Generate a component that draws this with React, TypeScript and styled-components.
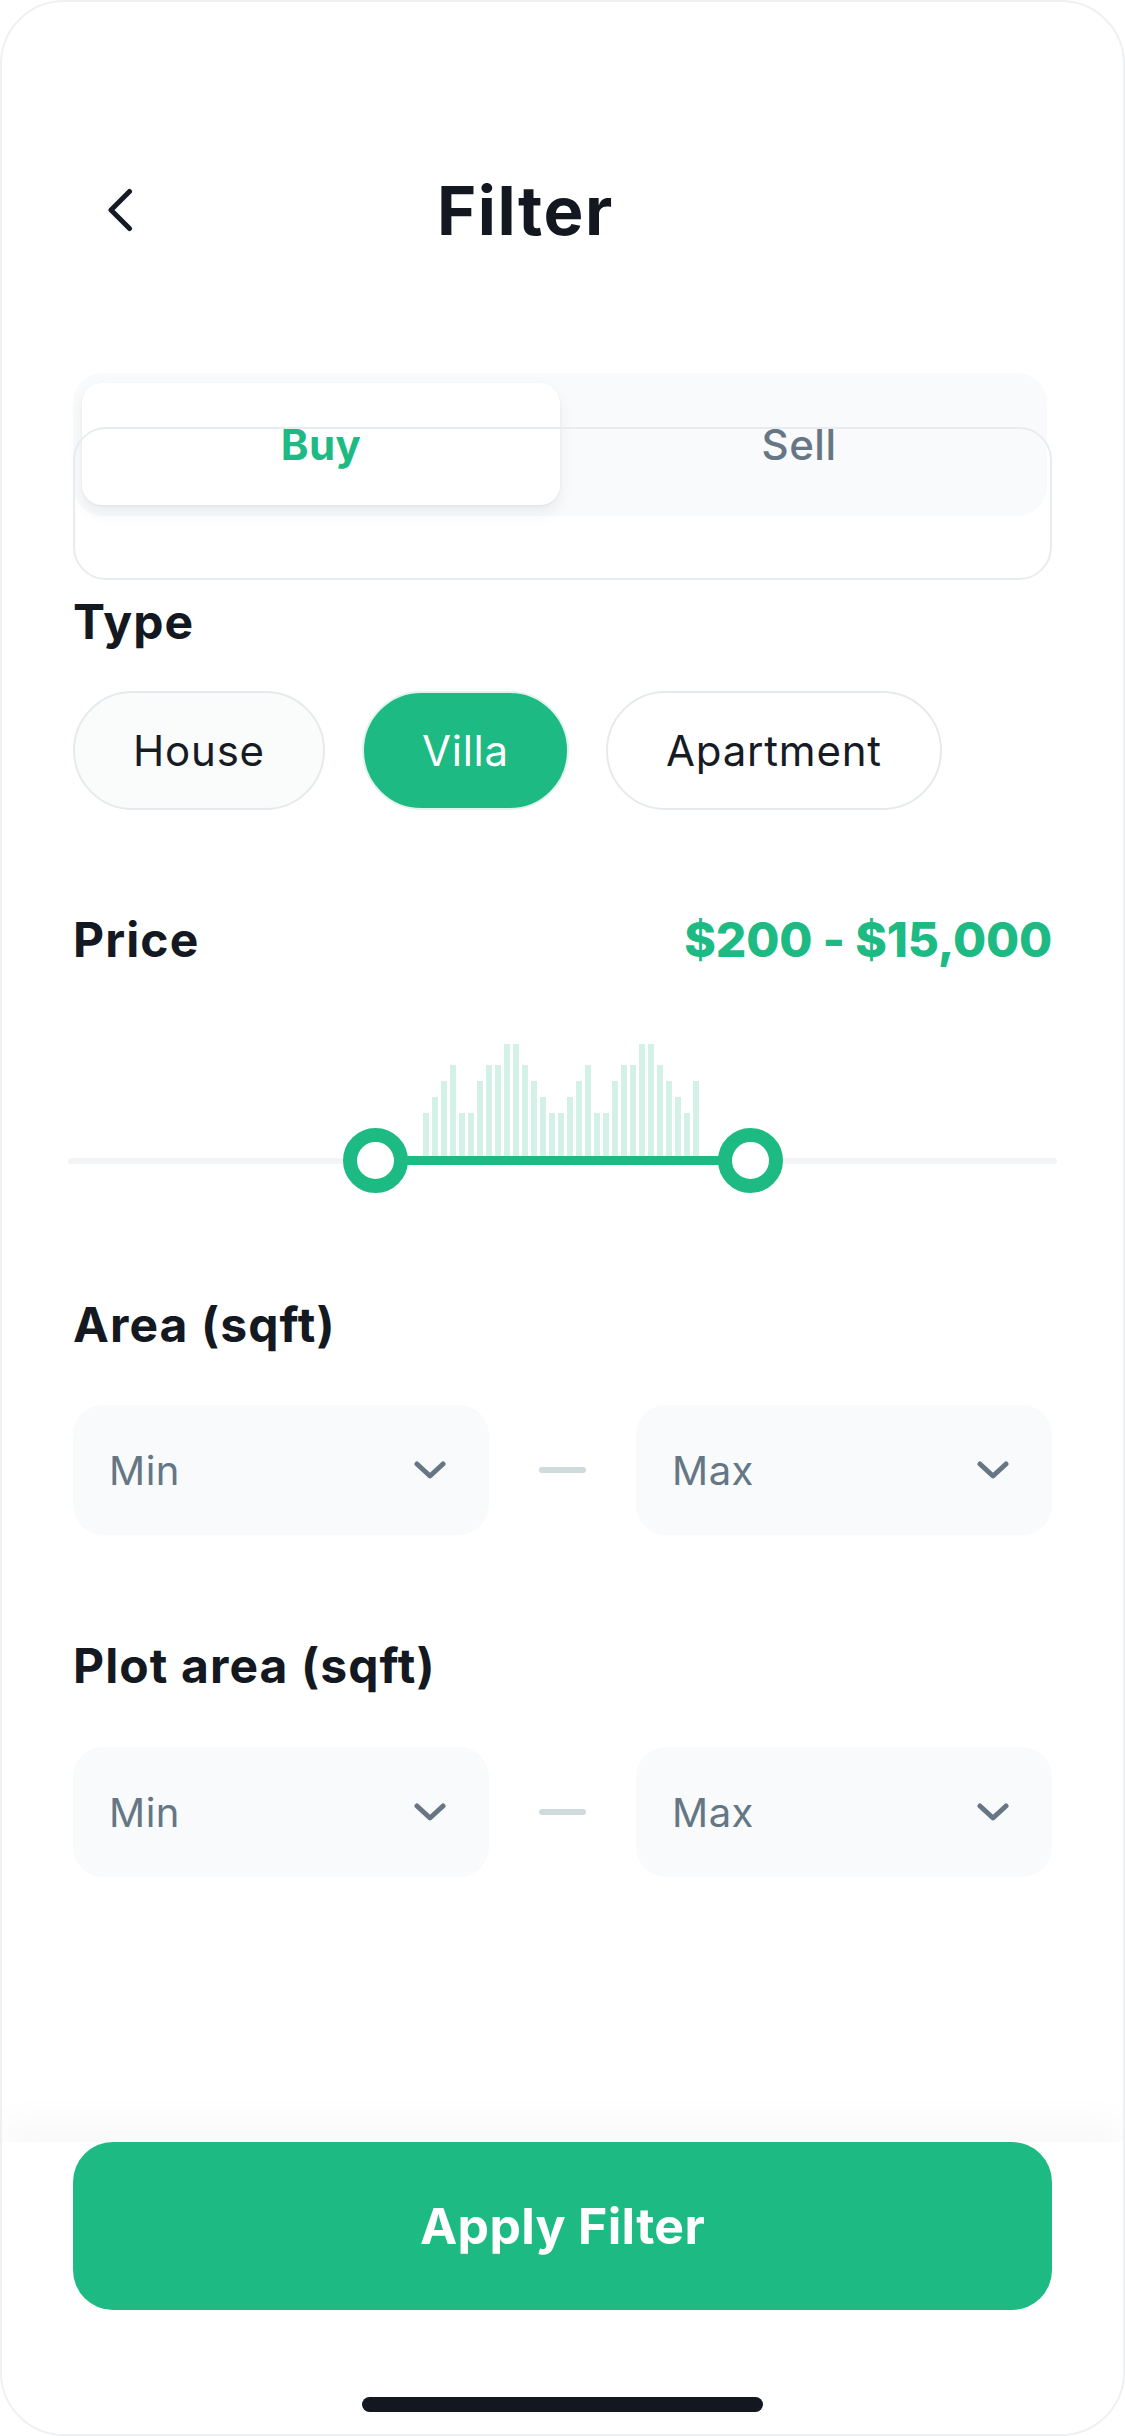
import styled, { createGlobalStyle } from "styled-components";

const GlobalStyle = createGlobalStyle`
  html, body {
    margin: 0;
    padding: 0;
    background: #ffffff;
  }
  body {
    font-family: Inter, "Noto Sans", sans-serif;
    -webkit-font-smoothing: antialiased;
  }
  * {
    box-sizing: border-box;
  }
`;

const GREEN = "#1dba84";

const Screen = styled.div`
  width: 1125px;
  height: 2436px;
  border: 2px solid #eef0f2;
  border-radius: 64px;
  overflow: hidden;
  background: #ffffff;
  display: flex;
  flex-direction: column;
`;

const Content = styled.main`
  flex: 1;
  padding: 0 71px;
  display: flex;
  flex-direction: column;
`;

const Header = styled.header`
  margin-top: 143px;
  height: 130px;
  display: flex;
  align-items: center;
`;

const BackButton = styled.button`
  margin-left: 35px;
  width: 26px;
  height: 44px;
  padding: 0;
  border: none;
  background: transparent;
  display: flex;
  align-items: center;
  justify-content: center;
`;

const Title = styled.h1`
  margin: 0 0 0 303px;
  font-size: 67px;
  line-height: 1;
  font-weight: 700;
  letter-spacing: 1.5px;
  color: #121720;
`;

const SegmentBlock = styled.div`
  position: relative;
  margin-top: 98px;
  height: 207px;
`;

const SegmentTrack = styled.div`
  height: 143px;
  margin-right: 5px;
  padding: 10px 9px 11px;
  border-radius: 30px;
  background: #f8fafb;
  display: flex;
`;

const SegmentTab = styled.button<{ $active?: boolean }>`
  flex: 1;
  border: none;
  border-radius: 20px;
  background: ${(p) => (p.$active ? "#ffffff" : "transparent")};
  box-shadow: ${(p) =>
    p.$active
      ? "0 8px 16px rgba(16, 24, 40, 0.06), 0 1px 3px rgba(16, 24, 40, 0.05)"
      : "none"};
  font-family: inherit;
  font-size: 42px;
  font-weight: ${(p) => (p.$active ? 700 : 500)};
  letter-spacing: 0.5px;
  color: ${(p) => (p.$active ? GREEN : "#677685")};
`;

const SegmentOutline = styled.div`
  position: absolute;
  top: 54px;
  left: 0;
  right: 0;
  height: 153px;
  border: 2.5px solid #e9ecee;
  border-radius: 33px;
  pointer-events: none;
`;

const SectionLabel = styled.h2<{ $gap: number }>`
  margin: ${(p) => p.$gap}px 0 0;
  font-size: 48px;
  line-height: 58px;
  font-weight: 700;
  letter-spacing: 1.1px;
  color: #131821;
`;

const ChipRow = styled.div`
  margin-top: 40px;
  display: flex;
  gap: 37px;
`;

type ChipTone = "muted" | "active" | "plain";

const Chip = styled.button<{ $tone: ChipTone }>`
  height: 119px;
  padding: 0 58px;
  border-radius: 60px;
  border: 2.5px solid ${(p) => (p.$tone === "active" ? "#e0f3ec" : "#e6eaec")};
  background: ${(p) =>
    p.$tone === "active" ? GREEN : p.$tone === "muted" ? "#fafbfb" : "#ffffff"};
  color: ${(p) => (p.$tone === "active" ? "#ffffff" : "#161b24")};
  font-family: inherit;
  font-size: 42px;
  font-weight: 400;
  letter-spacing: 0.8px;
`;

const PriceRow = styled.div`
  margin-top: 101px;
  display: flex;
  justify-content: space-between;
  align-items: center;
`;

const PriceValue = styled.span`
  font-size: 48px;
  line-height: 58px;
  font-weight: 800;
  letter-spacing: -0.2px;
  color: ${GREEN};
`;

const SliderArea = styled.div`
  position: relative;
  margin: 71px -5px 0;
  height: 160px;
`;

const Histogram = styled.div`
  height: 116px;
  padding-left: 355px;
  display: flex;
  align-items: flex-end;
  gap: 3px;
`;

const Bar = styled.span`
  width: 6px;
  background: #d3f1e6;
`;

const Rail = styled.div`
  margin-top: 2px;
  height: 6px;
  border-radius: 3px;
  background: #f2f4f5;
`;

const ActiveRange = styled.div`
  position: absolute;
  top: 116px;
  left: 307px;
  width: 375px;
  height: 9px;
  background: ${GREEN};
`;

const Thumb = styled.span<{ $x: number }>`
  position: absolute;
  top: 88px;
  left: ${(p) => p.$x - 32}px;
  width: 65px;
  height: 65px;
  border-radius: 50%;
  border: 14.5px solid ${GREEN};
  background: #ffffff;
`;

const RangeRow = styled.div<{ $gap: number }>`
  margin-top: ${(p) => p.$gap}px;
  display: grid;
  grid-template-columns: 1fr 47px 1fr;
  column-gap: 50px;
  align-items: center;
`;

const Select = styled.button`
  height: 130px;
  padding: 0 43px 0 36px;
  border: none;
  border-radius: 30px;
  background: #f8fafb;
  display: flex;
  align-items: center;
  justify-content: space-between;
  font-family: inherit;
  font-size: 40px;
  font-weight: 400;
  letter-spacing: 0.5px;
  color: #657684;
`;

const Dash = styled.span`
  height: 6px;
  border-radius: 3px;
  background: #cfdadc;
`;

const Footer = styled.footer`
  padding: 0 71px 22px;
  background: #ffffff;
  box-shadow: 0 -22px 34px rgba(16, 24, 40, 0.028);
`;

const ApplyButton = styled.button`
  width: 100%;
  height: 168px;
  border: none;
  border-radius: 40px;
  background: ${GREEN};
  color: #ffffff;
  font-family: inherit;
  font-size: 50px;
  font-weight: 700;
  letter-spacing: 0.3px;
`;

const HomeIndicator = styled.div`
  width: 401px;
  height: 15px;
  margin: 87px auto 0;
  border-radius: 8px;
  background: #13171f;
`;

const barHeights = [
  43, 59, 75, 91, 43, 43, 75, 91, 91, 112, 112, 91, 75, 59, 43, 43, 59, 75, 91,
  43, 43, 75, 91, 91, 112, 112, 91, 75, 59, 43, 75,
];

function ChevronLeft() {
  return (
    <svg width="26" height="44" viewBox="0 0 26 44" fill="none">
      <path
        d="M21.5 3.5L3 22l18.5 18.5"
        stroke="#151a24"
        strokeWidth="5"
        strokeLinecap="round"
        strokeLinejoin="round"
      />
    </svg>
  );
}

function ChevronDown() {
  return (
    <svg width="32" height="18" viewBox="0 0 32 18" fill="none">
      <path
        d="M3 3l13 12L29 3"
        stroke="#677685"
        strokeWidth="5"
        strokeLinecap="round"
        strokeLinejoin="round"
      />
    </svg>
  );
}

function MinMax({ gap }: { gap: number }) {
  return (
    <RangeRow $gap={gap}>
      <Select>
        Min
        <ChevronDown />
      </Select>
      <Dash />
      <Select>
        Max
        <ChevronDown />
      </Select>
    </RangeRow>
  );
}

export default function App() {
  return (
    <>
      <GlobalStyle />
      <Screen>
        <Content>
          <Header>
            <BackButton aria-label="Back">
              <ChevronLeft />
            </BackButton>
            <Title>Filter</Title>
          </Header>

          <SegmentBlock>
            <SegmentTrack>
              <SegmentTab $active>Buy</SegmentTab>
              <SegmentTab>Sell</SegmentTab>
            </SegmentTrack>
            <SegmentOutline />
          </SegmentBlock>

          <SectionLabel $gap={13}>Type</SectionLabel>
          <ChipRow>
            <Chip $tone="muted">House</Chip>
            <Chip $tone="active">Villa</Chip>
            <Chip $tone="plain">Apartment</Chip>
          </ChipRow>

          <PriceRow>
            <SectionLabel $gap={0}>Price</SectionLabel>
            <PriceValue>$200 - $15,000</PriceValue>
          </PriceRow>

          <SliderArea>
            <Histogram>
              {barHeights.map((h, i) => (
                <Bar key={i} style={{ height: h }} />
              ))}
            </Histogram>
            <Rail />
            <ActiveRange />
            <Thumb $x={307} />
            <Thumb $x={682} />
          </SliderArea>

          <SectionLabel $gap={96}>Area (sqft)</SectionLabel>
          <MinMax gap={51} />

          <SectionLabel $gap={102}>Plot area (sqft)</SectionLabel>
          <MinMax gap={52} />
        </Content>

        <Footer>
          <ApplyButton>Apply Filter</ApplyButton>
          <HomeIndicator />
        </Footer>
      </Screen>
    </>
  );
}
